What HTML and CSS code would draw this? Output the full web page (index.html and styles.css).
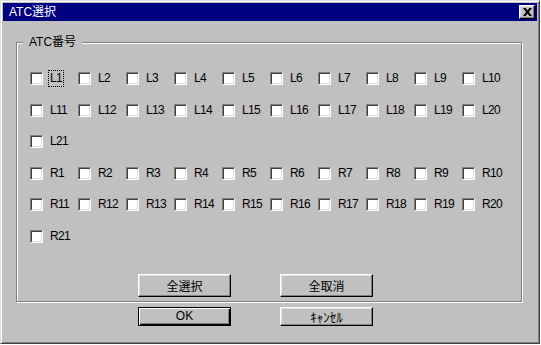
FILE: index.html
```html
<!DOCTYPE html>
<html lang="ja">
<head>
  <meta charset="UTF-8" />
  <title>ATC選択</title>
  <link rel="stylesheet" href="styles.css">
</head>
<body>

  <div class="dialog">
    <div class="titlebar">
      <span class="title">ATC選択</span>
      <button class="close-btn" aria-label="閉じる">
        <svg width="9" height="8" viewBox="0 0 9 8"><path d="M0 0h2.6L4.5 2.6 6.4 0H9L5.8 4 9 8H6.4L4.5 5.4 2.6 8H0l3.2-4z" fill="#000"/></svg>
      </button>
    </div>

    <div class="content">
      <fieldset class="group">
        <legend>ATC番号</legend>

        <div class="atc-grid">
          <label class="atc"><input type="checkbox"><span class="focus">L1</span></label>
          <label class="atc"><input type="checkbox"><span>L2</span></label>
          <label class="atc"><input type="checkbox"><span>L3</span></label>
          <label class="atc"><input type="checkbox"><span>L4</span></label>
          <label class="atc"><input type="checkbox"><span>L5</span></label>
          <label class="atc"><input type="checkbox"><span>L6</span></label>
          <label class="atc"><input type="checkbox"><span>L7</span></label>
          <label class="atc"><input type="checkbox"><span>L8</span></label>
          <label class="atc"><input type="checkbox"><span>L9</span></label>
          <label class="atc"><input type="checkbox"><span>L10</span></label>
          <label class="atc"><input type="checkbox"><span>L11</span></label>
          <label class="atc"><input type="checkbox"><span>L12</span></label>
          <label class="atc"><input type="checkbox"><span>L13</span></label>
          <label class="atc"><input type="checkbox"><span>L14</span></label>
          <label class="atc"><input type="checkbox"><span>L15</span></label>
          <label class="atc"><input type="checkbox"><span>L16</span></label>
          <label class="atc"><input type="checkbox"><span>L17</span></label>
          <label class="atc"><input type="checkbox"><span>L18</span></label>
          <label class="atc"><input type="checkbox"><span>L19</span></label>
          <label class="atc"><input type="checkbox"><span>L20</span></label>
          <label class="atc"><input type="checkbox"><span>L21</span></label>

          <!-- R side starts on a new row -->
          <label class="atc row-start"><input type="checkbox"><span>R1</span></label>
          <label class="atc"><input type="checkbox"><span>R2</span></label>
          <label class="atc"><input type="checkbox"><span>R3</span></label>
          <label class="atc"><input type="checkbox"><span>R4</span></label>
          <label class="atc"><input type="checkbox"><span>R5</span></label>
          <label class="atc"><input type="checkbox"><span>R6</span></label>
          <label class="atc"><input type="checkbox"><span>R7</span></label>
          <label class="atc"><input type="checkbox"><span>R8</span></label>
          <label class="atc"><input type="checkbox"><span>R9</span></label>
          <label class="atc"><input type="checkbox"><span>R10</span></label>
          <label class="atc"><input type="checkbox"><span>R11</span></label>
          <label class="atc"><input type="checkbox"><span>R12</span></label>
          <label class="atc"><input type="checkbox"><span>R13</span></label>
          <label class="atc"><input type="checkbox"><span>R14</span></label>
          <label class="atc"><input type="checkbox"><span>R15</span></label>
          <label class="atc"><input type="checkbox"><span>R16</span></label>
          <label class="atc"><input type="checkbox"><span>R17</span></label>
          <label class="atc"><input type="checkbox"><span>R18</span></label>
          <label class="atc"><input type="checkbox"><span>R19</span></label>
          <label class="atc"><input type="checkbox"><span>R20</span></label>
          <label class="atc"><input type="checkbox"><span>R21</span></label>
        </div>

        <div class="group-buttons">
          <button class="btn btn-tall">全選択</button>
          <button class="btn btn-tall">全取消</button>
        </div>
      </fieldset>

      <div class="dialog-buttons">
        <button class="btn btn-default">OK</button>
        <button class="btn btn-kana">ｷｬﾝｾﾙ</button>
      </div>
    </div>
  </div>

</body>
</html>
```

FILE: styles.css
```css
* {
  box-sizing: border-box;
}

body {
  margin: 0;
  background: #fff;
  font-family: "Liberation Sans", "Noto Sans CJK JP", sans-serif;
  font-size: 12px;
  color: #000;
}

/* window frame */
.dialog {
  width: 540px;
  height: 344px;
  padding: 2px;
  background: #c0c0c0;
  border: 1px solid;
  border-color: #dfdfdf #404040 #404040 #dfdfdf;
  box-shadow: inset 1px 1px #fff, inset -1px -1px #808080;
}

.titlebar {
  display: flex;
  align-items: center;
  justify-content: space-between;
  height: 18px;
  padding: 0 2px 0 6px;
  background: #000080;
  color: #fff;
}

.title {
  font-size: 12px;
  line-height: 18px;
}

.close-btn {
  display: flex;
  align-items: center;
  justify-content: center;
  width: 16px;
  height: 14px;
  padding: 0;
  background: #c0c0c0;
  border: 1px solid;
  border-color: #fff #000 #000 #fff;
  box-shadow: inset -1px -1px #808080, inset 1px 1px #dfdfdf;
}

.content {
  padding-left: 13px;
}

/* group box with etched line */
.group {
  width: 506px;
  margin: 14px 0 0 0;
  padding: 0 0 4px 0;
  min-width: 0;
  border: 1px solid #808080;
  box-shadow: inset 1px 1px #fff, 1px 1px #fff;
}

.group legend {
  margin-left: 6px;
  padding: 0 6px;
  line-height: 15px;
  background: #c0c0c0;
}

.atc-grid {
  display: grid;
  grid-template-columns: repeat(10, 48px);
  grid-auto-rows: 13px;
  row-gap: 18.6px;
  margin: 22px 0 0 13px;
}

.atc {
  display: flex;
  align-items: center;
  font-size: 12px;
  letter-spacing: -0.7px;
  line-height: 13px;
}

.row-start {
  grid-column: 1;
}

.atc input {
  appearance: none;
  -webkit-appearance: none;
  flex-shrink: 0;
  width: 13px;
  height: 13px;
  margin: 0 5px 0 0;
  background: #fff;
  border: 1px solid;
  border-color: #808080 #fff #fff #808080;
  box-shadow: inset 1px 1px #404040, inset -1px -1px #dfdfdf;
}

.atc span {
  padding: 1px 1px;
  border: 1px solid transparent;
}

.atc .focus {
  border: 1px dotted #000;
}

/* push buttons */
.btn {
  height: 19px;
  width: 93px;
  padding: 0;
  font-family: "Liberation Sans", "Noto Sans CJK JP", sans-serif;
  font-size: 12px;
  color: #000;
  background: #c0c0c0;
  border: 1px solid;
  border-color: #fff #000 #000 #fff;
  box-shadow: inset -1px -1px #808080, inset 1px 1px #dfdfdf;
}

.btn-tall {
  height: 23px;
}

.btn-kana {
  font-family: "Noto Sans CJK JP", sans-serif;
  font-size: 13px;
  line-height: 17px;
}

.btn-default {
  border-color: #000;
  box-shadow: inset 1px 1px #fff, inset -1px -1px #000, inset -2px -2px #808080;
}

.group-buttons {
  display: flex;
  gap: 49px;
  margin: 31px 0 0 121px;
}

.dialog-buttons {
  display: flex;
  gap: 49px;
  margin: 5px 0 0 122px;
}
```
